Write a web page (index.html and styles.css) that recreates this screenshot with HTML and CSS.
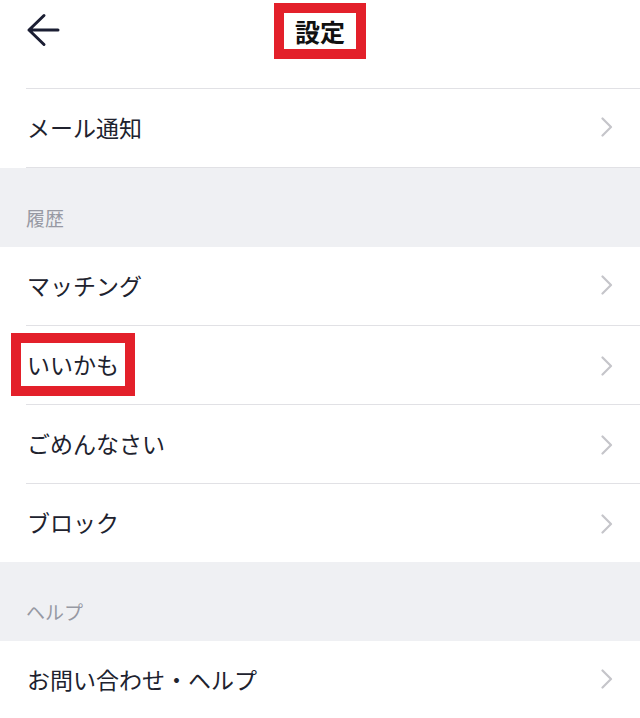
FILE: index.html
```html
<!DOCTYPE html>
<html lang="ja">
<head>
<meta charset="utf-8">
<title>設定</title>
<link rel="stylesheet" href="styles.css">
</head>
<body>
<div class="screen">
  <header class="topbar">
    <div class="bar">
      <div class="bar-left">
        <svg class="back" viewBox="0 0 34 34" width="34" height="34" aria-hidden="true">
          <path d="M3 17 H32 M18 2.5 L3 17 L18 31.5" fill="none" stroke="#1b1e33" stroke-width="3" stroke-linecap="round" stroke-linejoin="round"/>
        </svg>
      </div>
      <h1 class="title"><span class="marked marked-title">設定</span></h1>
      <div class="bar-right"></div>
    </div>
  </header>

  <section class="group boxed">
    <div class="row"><span class="label">メール通知</span><svg class="chev" viewBox="0 0 12 20" width="12" height="20"><polyline points="1.5,1.5 10,10 1.5,18.5" fill="none" stroke="#c5c5ca" stroke-width="2.2" stroke-linecap="round" stroke-linejoin="round"/></svg></div>
  </section>

  <div class="section-head"><span>履歴</span></div>
  <section class="group">
    <div class="row"><span class="label">マッチング</span><svg class="chev" viewBox="0 0 12 20" width="12" height="20"><polyline points="1.5,1.5 10,10 1.5,18.5" fill="none" stroke="#c5c5ca" stroke-width="2.2" stroke-linecap="round" stroke-linejoin="round"/></svg></div>
    <div class="row"><span class="label marked marked-row">いいかも</span><svg class="chev" viewBox="0 0 12 20" width="12" height="20"><polyline points="1.5,1.5 10,10 1.5,18.5" fill="none" stroke="#c5c5ca" stroke-width="2.2" stroke-linecap="round" stroke-linejoin="round"/></svg></div>
    <div class="row"><span class="label">ごめんなさい</span><svg class="chev" viewBox="0 0 12 20" width="12" height="20"><polyline points="1.5,1.5 10,10 1.5,18.5" fill="none" stroke="#c5c5ca" stroke-width="2.2" stroke-linecap="round" stroke-linejoin="round"/></svg></div>
    <div class="row"><span class="label">ブロック</span><svg class="chev" viewBox="0 0 12 20" width="12" height="20"><polyline points="1.5,1.5 10,10 1.5,18.5" fill="none" stroke="#c5c5ca" stroke-width="2.2" stroke-linecap="round" stroke-linejoin="round"/></svg></div>
  </section>

  <div class="section-head"><span>ヘルプ</span></div>
  <section class="group">
    <div class="row"><span class="label">お問い合わせ・ヘルプ</span><svg class="chev" viewBox="0 0 12 20" width="12" height="20"><polyline points="1.5,1.5 10,10 1.5,18.5" fill="none" stroke="#c5c5ca" stroke-width="2.2" stroke-linecap="round" stroke-linejoin="round"/></svg></div>
  </section>
</div>
</body>
</html>
```

FILE: styles.css
```css
* { box-sizing: border-box; }
html, body { margin: 0; padding: 0; background: #ffffff; }
body {
  font-family: "Noto Sans CJK JP", "Noto Sans", sans-serif;
  color: #20222e;
  overflow: hidden;
}
.screen { width: 640px; height: 718px; overflow: hidden; background: #fff; }

.topbar { padding-bottom: 26px; }
.bar {
  height: 62px;
  display: grid;
  grid-template-columns: 1fr auto 1fr;
  align-items: center;
}
.bar-left { display: flex; align-items: center; padding-left: 26px; }
.back { display: block; margin-top: -3px; }
.title {
  margin: 0;
  font-size: 25px;
  font-weight: 700;
  line-height: 30px;
  color: #111;
}

.group { background: #fff; }
.group .row + .row::before,
.boxed::before,
.boxed::after {
  content: "";
  display: block;
  height: 1px;
  margin-left: 26px;
  background: #e1e1e5;
}
.row {
  height: 78px;
  display: flex;
  align-items: center;
  justify-content: space-between;
  padding: 0 27px 2px;
}
.group .row + .row {
  height: 79px;
  flex-wrap: wrap;
  align-content: flex-start;
  padding: 0;
}
.group .row + .row::before { flex: 0 0 calc(100% - 26px); }
.group .row + .row .label { margin-left: 27px; margin-top: 24px; }
.group .row + .row .chev { margin-right: 27px; margin-top: 28px; }

.label {
  font-size: 23px;
  line-height: 28px;
  font-weight: 400;
  white-space: nowrap;
}
.chev { display: block; flex: none; }

.section-head {
  height: 79px;
  background: #eff0f3;
  display: flex;
  align-items: flex-end;
  padding: 0 26px 17px;
}
.section-head span {
  font-size: 19px;
  line-height: 24px;
  color: #9799a3;
}

/* red annotation boxes */
.marked { position: relative; display: inline-block; }
.marked::after {
  content: "";
  position: absolute;
  border: 10px solid #e3202a;
  pointer-events: none;
}
.marked-title::after { top: -13px; bottom: -13px; left: -21px; right: -21px; }
.marked-row::after { top: -17px; bottom: -18px; left: -16px; right: -16px; }
```
